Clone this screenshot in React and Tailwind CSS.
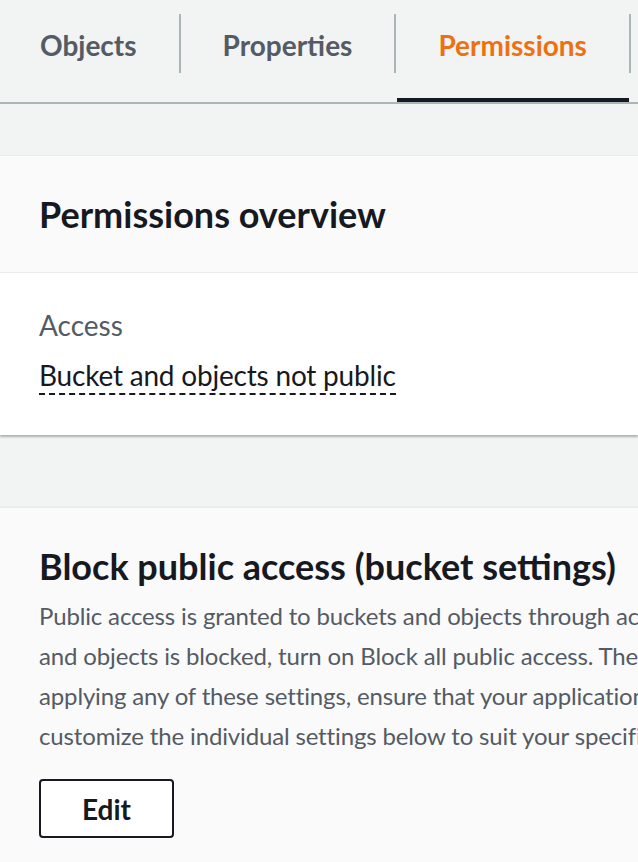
export default function App() {
  const font = { fontFamily: "Lato, 'Noto Sans', sans-serif" };
  return (
    <div className="w-[638px] h-[862px] overflow-hidden bg-[#f2f3f3] text-[#16191f]" style={font}>
      {/* Tabs */}
      <div className="relative flex items-stretch h-[104px] border-b-2 border-[#aab7b8] w-[900px] -ml-[2px]">
        <div className="flex items-center h-[102px]">
          <div className="relative h-full flex items-center px-[42px] pb-[12px]">
            <span className="text-[28px] font-bold text-[#545b64]">Objects</span>
          </div>
          <div className="w-[2px] h-[59px] bg-[#aab7b8] self-start mt-[14px]" />
          <div className="relative h-full flex items-center px-[42px] pb-[12px]">
            <span className="text-[28px] font-bold text-[#545b64]">Properties</span>
          </div>
          <div className="w-[2px] h-[59px] bg-[#aab7b8] self-start mt-[14px]" />
          <div className="relative h-full flex items-center px-[42px] pb-[12px]">
            <span className="text-[28px] font-bold text-[#ec7211]">Permissions</span>
            <div className="absolute left-[1px] right-0 bottom-0 h-[4px] bg-[#16191f]" />
          </div>
          <div className="w-[2px] h-[59px] bg-[#aab7b8] self-start mt-[14px]" />
          <div className="relative h-full flex items-center px-[42px] pb-[12px]">
            <span className="text-[28px] font-bold text-[#545b64]">Metrics</span>
          </div>
        </div>
      </div>

      <div className="h-[51px]" />

      {/* Card 1 */}
      <div className="bg-white border-t border-[#eaeded] shadow-[0_2px_2px_0_rgba(0,28,36,0.3)]">
        <div className="bg-[#fafafa] border-b border-[#eaeded] px-[39px] pt-[36px] pb-[36px]">
          <h2 className="text-[36px] leading-[44px] font-bold">Permissions overview</h2>
        </div>
        <div className="px-[39px] pt-[32px] pb-[40px]">
          <div className="text-[28px] leading-[40px] text-[#545b64]">Access</div>
          <div className="mt-[12px]">
            <span className="inline-block text-[28px] leading-[36px] tracking-[-0.2px] border-b-2 border-dashed border-[#16191f]">
              Bucket and objects not public
            </span>
          </div>
        </div>
      </div>

      <div className="h-[71px]" />

      {/* Card 2 */}
      <div className="bg-[#fafafa] border-t-2 border-[#eaeded] px-[39px] pt-[36px] pb-[40px]">
        <h2 className="text-[36px] leading-[44px] font-bold whitespace-nowrap">Block public access (bucket settings)</h2>
        <div className="mt-[8px] text-[24px] leading-[40px] tracking-[-0.15px] text-[#545b64] whitespace-nowrap">
          <div>Public access is granted to buckets and objects through access control lists (ACLs), bucket policies, access point policies, or all. In order to ensure that public access to all your S3 buckets</div>
          <div>and objects is blocked, turn on Block all public access. These settings apply only to this bucket and its access points. AWS recommends that you turn on Block all public access, but before</div>
          <div>applying any of these settings, ensure that your applications will work correctly without public access. If you require some level of public access to your buckets or objects within, you can</div>
          <div>customize the individual settings below to suit your specific storage use cases.</div>
        </div>
        <button className="mt-[23px] w-[135px] h-[59px] border-2 border-[#16191f] rounded-[4px] bg-white text-[28px] font-bold text-[#16191f] flex items-center justify-center">
          Edit
        </button>
      </div>
    </div>
  );
}
